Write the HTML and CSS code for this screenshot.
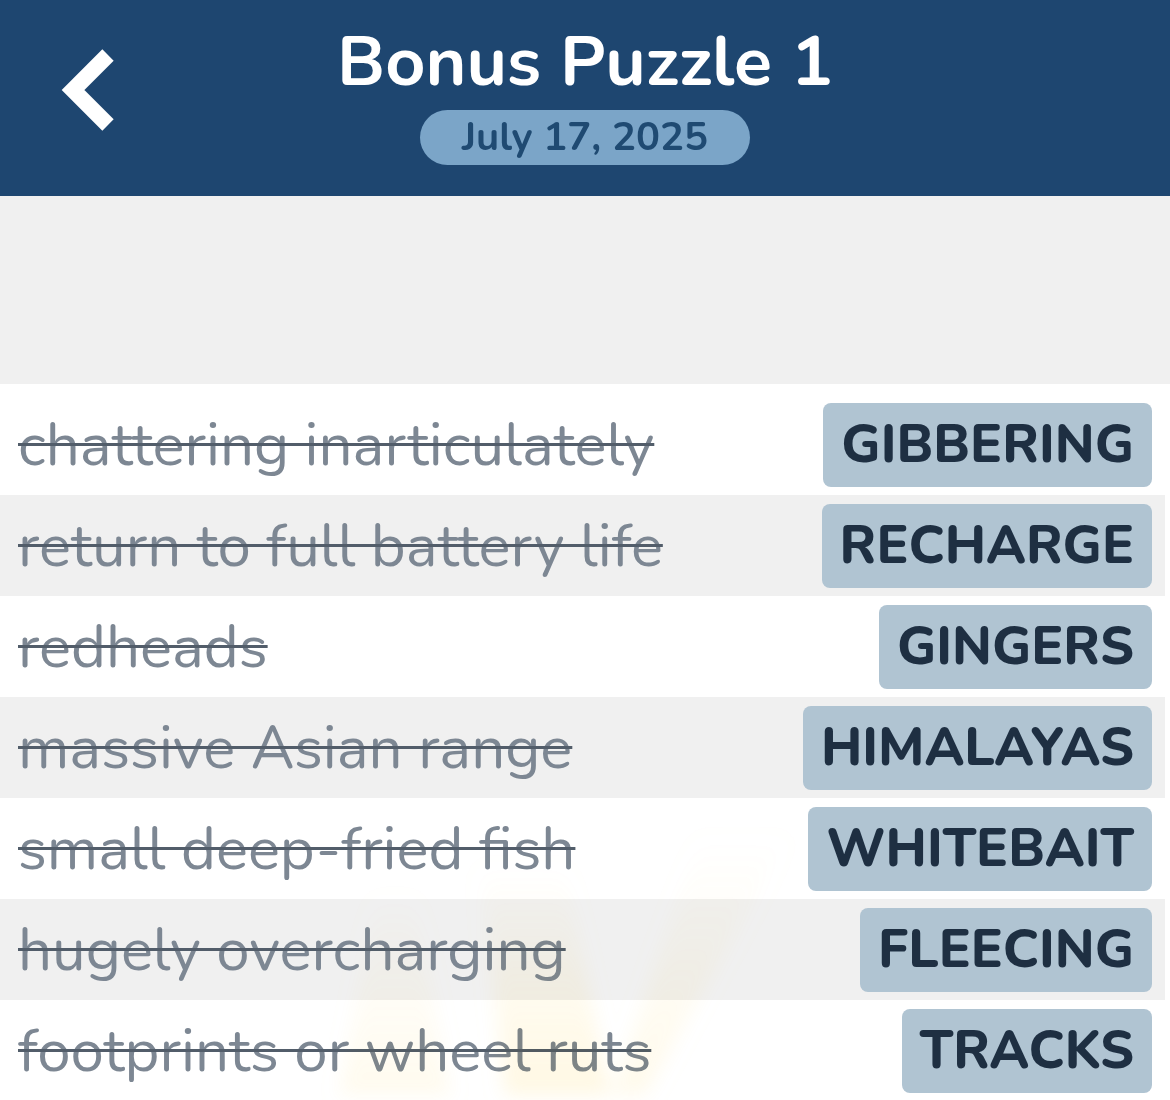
FILE: index.html
```html
<!DOCTYPE html>
<html lang="en">
<head>
    <meta charset="UTF-8">
    <meta name="viewport" content="width=device-width, initial-scale=1.0">
    <title>Bonus Puzzle 1</title>
    <link rel="stylesheet" href="styles.css">
</head>
<body>
    <!-- Header -->
    <header class="top-bar">
        <button class="back-btn" aria-label="Back">
            <svg width="80" height="100" viewBox="0 0 80 100">
                <path d="M60 9 L25 44 L60 79" fill="none" stroke="#ffffff" stroke-width="16" stroke-linecap="butt" stroke-linejoin="miter"/>
            </svg>
        </button>
        <div class="title-block">
            <h1 class="title">Bonus Puzzle 1</h1>
            <span class="date-pill">July 17, 2025</span>
        </div>
    </header>

    <div class="spacer"></div>

    <!-- Solved clues -->
    <main class="clue-list">
        <div class="clue-row first">
            <span class="clue">chattering inarticulately</span>
            <span class="answer">GIBBERING</span>
        </div>
        <div class="clue-row alt">
            <span class="clue">return to full battery life</span>
            <span class="answer">RECHARGE</span>
        </div>
        <div class="clue-row">
            <span class="clue">redheads</span>
            <span class="answer">GINGERS</span>
        </div>
        <div class="clue-row alt">
            <span class="clue">massive Asian range</span>
            <span class="answer">HIMALAYAS</span>
        </div>
        <div class="clue-row">
            <span class="clue">small deep-fried fish</span>
            <span class="answer">WHITEBAIT</span>
        </div>
        <div class="clue-row alt">
            <span class="clue">hugely overcharging</span>
            <span class="answer">FLEECING</span>
        </div>
        <div class="clue-row">
            <span class="clue">footprints or wheel ruts</span>
            <span class="answer">TRACKS</span>
        </div>

        <!-- faint light rays behind the last rows -->
        <div class="rays" aria-hidden="true">
            <svg width="500" height="300" viewBox="300 800 500 300">
                <defs>
                    <linearGradient id="fade" x1="0" y1="1" x2="0" y2="0">
                        <stop offset="0" stop-color="#ffcf3a" stop-opacity="1"/>
                        <stop offset="1" stop-color="#ffcf3a" stop-opacity="0"/>
                    </linearGradient>
                </defs>
                <polygon points="340,1100 450,1100 415,900 375,900" fill="url(#fade)" opacity="0.6"/>
                <polygon points="505,1100 610,1100 565,870 480,870" fill="url(#fade)" opacity="1"/>
                <polygon points="612,1100 645,1100 790,840 700,840" fill="url(#fade)" opacity="0.7"/>
            </svg>
        </div>
    </main>
</body>
</html>
```

FILE: styles.css
```css
body {
    font-family: "Nunito", "Lato", "Open Sans", sans-serif;
    margin: 0;
    padding: 0;
    background-color: #ffffff;
    color: #333;
    overflow: hidden;
}

/* Header */
.top-bar {
    position: relative;
    height: 196px;
    background-color: #1e4670;
    display: flex;
    justify-content: center;
}

.back-btn {
    position: absolute;
    left: 48px;
    top: 46px;
    padding: 0;
    border: none;
    background: none;
    cursor: pointer;
}

.title-block {
    display: flex;
    flex-direction: column;
    align-items: center;
}

.title {
    margin: 20px 0 0;
    font-size: 70px;
    line-height: 84px;
    font-weight: 700;
    color: #ffffff;
}

.date-pill {
    margin-top: 6px;
    width: 330px;
    height: 55px;
    line-height: 55px;
    text-align: center;
    border-radius: 28px;
    background-color: #7ba5c8;
    color: #1f4a72;
    font-size: 40px;
    font-weight: 700;
}

.spacer {
    height: 188px;
    background-color: #f0f0f0;
}

/* Clue rows */
.clue-list {
    position: relative;
}

.clue-row {
    height: 101px;
    margin-right: 5px;
    display: flex;
    align-items: center;
    justify-content: space-between;
    padding: 0 18px;
    background-color: #ffffff;
}

.clue-row.first {
    height: 111px;
    padding-top: 10px;
    box-sizing: border-box;
}

.clue-row.alt {
    background-color: #f0f0f0;
}

.clue {
    font-size: 60px;
    color: #7d8793;
    text-decoration: line-through;
    text-decoration-color: #525d6a;
    text-decoration-thickness: 3px;
    white-space: nowrap;
}

.answer {
    height: 84px;
    line-height: 84px;
    padding: 0 18px;
    border-radius: 8px;
    background-color: #b0c4d2;
    color: #1e2f42;
    font-size: 53px;
    font-weight: 800;
    margin-right: -5px;
}

.rays {
    position: absolute;
    left: 300px;
    bottom: 0;
    opacity: 0.14;
    mix-blend-mode: multiply;
    filter: blur(9px);
    pointer-events: none;
}
```
